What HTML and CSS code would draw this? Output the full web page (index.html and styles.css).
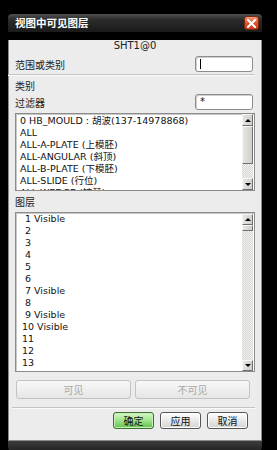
FILE: index.html
```html
<!DOCTYPE html>
<html>
<head>
<meta charset="utf-8">
<link rel="stylesheet" href="styles.css">
</head>
<body>
<div class="dialog">
  <div class="titlebar">
    <span class="title">视图中可见图层</span>
    <span class="close"><svg width="9" height="9" viewBox="0 0 9 9"><path d="M1 1L8 8M8 1L1 8" stroke="#fff" stroke-width="2" stroke-linecap="square"/></svg></span>
  </div>
  <div class="body">
    <div class="sheet">SHT1@0</div>
    <div class="row r1"><span class="cjk">范围或类别</span><div class="input"><span class="caret"></span></div></div>
    <div class="sep"></div>
    <div class="label cjk">类别</div>
    <div class="row r2"><span class="cjk">过滤器</span><div class="input">*</div></div>
    <div class="list list1">
      <div class="items">
        <div class="item">0 HB_MOULD : 胡波(137-14978868)</div>
        <div class="item">ALL</div>
        <div class="item">ALL-A-PLATE (上模胚)</div>
        <div class="item">ALL-ANGULAR (斜顶)</div>
        <div class="item">ALL-B-PLATE (下模胚)</div>
        <div class="item">ALL-SLIDE (行位)</div>
        <div class="item">ALL-WEDGE (铲基)</div>
      </div>
      <div class="sb">
        <div class="sbtn"><span class="up"></span></div>
        <div class="thumb t1"></div>
        <div class="track"></div>
        <div class="sbtn"><span class="down"></span></div>
      </div>
    </div>
    <div class="label cjk l2">图层</div>
    <div class="list list2">
      <div class="items">
        <div class="item"> 1 Visible</div>
        <div class="item"> 2</div>
        <div class="item"> 3</div>
        <div class="item"> 4</div>
        <div class="item"> 5</div>
        <div class="item"> 6</div>
        <div class="item"> 7 Visible</div>
        <div class="item"> 8</div>
        <div class="item"> 9 Visible</div>
        <div class="item">10 Visible</div>
        <div class="item">11</div>
        <div class="item">12</div>
        <div class="item">13</div>
        <div class="item">14</div>
      </div>
      <div class="sb">
        <div class="sbtn s2"><span class="up"></span></div>
        <div class="thumb t2"></div>
        <div class="track"></div>
        <div class="sbtn s2"><span class="down"></span></div>
      </div>
    </div>
    <div class="btnrow">
      <div class="dbtn">可见</div>
      <div class="dbtn">不可见</div>
    </div>
    <div class="sep2"></div>
    <div class="actions">
      <div class="abtn ok">确定</div>
      <div class="abtn">应用</div>
      <div class="abtn">取消</div>
    </div>
  </div>
  <div class="shadow"></div>
</div>
</body>
</html>
```

FILE: styles.css
```css
* { box-sizing: border-box; margin: 0; padding: 0; }
html, body { background: #000; }
body {
  width: 277px;
  height: 450px;
  overflow: hidden;
  font-family: "DejaVu Sans", "Noto Sans CJK SC", sans-serif;
  font-size: 9.5px;
  color: #111;
}
.cjk { font-family: "Noto Sans CJK SC", sans-serif; font-size: 10px; color: #222; }
.dialog { margin: 14px 0 0 8px; width: 254px; }
.titlebar {
  height: 18px;
  background: linear-gradient(#505050, #2c2c2c 30%, #1a1a1a);
  border-radius: 4px 4px 0 0;
  display: flex;
  align-items: center;
  justify-content: space-between;
  padding: 0 3px 0 7px;
}
.title {
  color: #fff;
  font-family: "Noto Sans CJK SC", sans-serif;
  font-weight: bold;
  font-size: 10.5px;
  line-height: 12px;
}
.close {
  width: 15px;
  height: 14px;
  border-radius: 3px;
  border: 1px solid #7a2810;
  background: linear-gradient(#f59a78, #e0552e 50%, #c8401c);
  display: flex;
  align-items: center;
  justify-content: center;
}
.body {
  background: #ececec;
  border: 1px solid #8a8a8a;
  border-top: none;
  padding: 0 6px 0 6px;
  height: 401px;
}
.sheet {
  margin-top: 8px;
  height: 12px;
  line-height: 12px;
  text-align: center;
  font-family: "DejaVu Sans", sans-serif;
  font-size: 10px;
  color: #222;
}
.row {
  display: flex;
  align-items: center;
  justify-content: space-between;
  height: 16px;
}
.r1 { margin-top: 4px; }
.r2 { margin-top: 2px; }
.input {
  width: 58px;
  height: 16px;
  margin-right: 2px;
  background: #fff;
  border: 1px solid #8c8c8c;
  border-radius: 3px;
  box-shadow: inset 1px 1px 0 #d0d0d0;
  padding-left: 4px;
  line-height: 14px;
  font-size: 10px;
  display: flex;
  align-items: center;
}
.caret { display: block; width: 1px; height: 10px; background: #000; }
.sep {
  margin-top: 2px;
  height: 2px;
  border-top: 1px solid #c4c4c4;
  border-bottom: 1px solid #fafafa;
  margin-left: -7px;
}
.label { margin-top: 4px; height: 12px; line-height: 12px; }
.l2 { margin-top: 5px; }
.list {
  display: flex;
  background: #fff;
  border: 1px solid #8c8c8c;
  box-shadow: inset 1px 1px 0 #c8c8c8;
}
.list1 { margin-top: 3px; height: 78px; }
.list2 { margin-top: 4px; height: 160px; }
.items { flex: 1; overflow: hidden; padding: 1px 0 0 4px; }
.list2 .items { padding: 0 0 0 6px; }
.item { height: 12px; line-height: 12px; white-space: pre; }
.sb {
  width: 11px;
  margin: 0 1px 0 0;
  display: flex;
  flex-direction: column;
}
.list2 .sb { margin-top: 1px; }
.sbtn, .thumb {
  background: linear-gradient(90deg, #e6e4e0, #d2d0cb);
  border: 1px solid;
  border-color: #f8f8f8 #707070 #707070 #f8f8f8;
}
.sbtn { height: 12px; display: flex; align-items: center; justify-content: center; }
.s2 { height: 11px; }
.t1 { height: 38px; }
.t2 { height: 6px; }
.track {
  flex: 1;
  background: repeating-conic-gradient(#d8d6d2 0 25%, #f2f2f0 0 50%) 0 0 / 2px 2px;
}
.up, .down { width: 0; height: 0; border-left: 3px solid transparent; border-right: 3px solid transparent; }
.up { border-bottom: 3px solid #000; }
.down { border-top: 3px solid #000; }
.btnrow {
  margin-top: 8px;
  height: 19px;
  display: flex;
  gap: 4px;
  padding: 0 5px 0 1px;
}
.dbtn {
  flex: 1;
  border: 1px solid #c2c2c2;
  border-radius: 3px;
  background: linear-gradient(#f8f8f8, #e6e6e6);
  color: #a8a8a8;
  font-family: "Noto Sans CJK SC", sans-serif;
  font-size: 10px;
  display: flex;
  align-items: center;
  justify-content: center;
}
.sep2 {
  margin-top: 8px;
  height: 2px;
  border-top: 1px solid #c4c4c4;
  border-bottom: 1px solid #fafafa;
  margin-left: -3px;
}
.actions {
  margin-top: 3px;
  height: 17px;
  display: flex;
  justify-content: flex-end;
  gap: 6px;
  padding-right: 7px;
}
.abtn {
  width: 41px;
  border: 1px solid #555;
  border-radius: 3px;
  background: linear-gradient(#ffffff, #e4e4e4 60%, #d4d4d4);
  font-family: "Noto Sans CJK SC", sans-serif;
  font-size: 10px;
  color: #111;
  display: flex;
  align-items: center;
  justify-content: center;
  box-shadow: inset 0 0 0 1px #fff;
}
.abtn.ok {
  border-color: #3d6e32;
  background: linear-gradient(#d8f8c8, #9ee38a 50%, #62c04c);
  box-shadow: inset 0 0 0 1px #c8f0b8;
}
.shadow {
  height: 10px;
  background: linear-gradient(#3c3c3c, #222);
  border-radius: 0 0 4px 4px;
}
```
